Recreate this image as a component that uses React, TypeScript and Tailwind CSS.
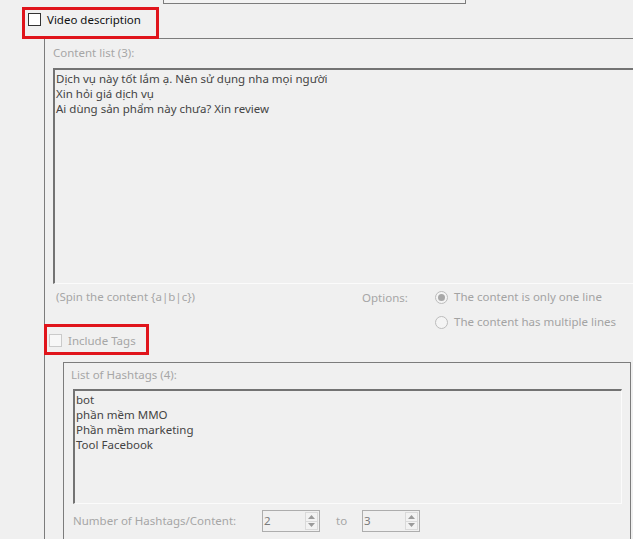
import React from "react";

const FONT = { fontFamily: '"Noto Sans", "Segoe UI", Arial, sans-serif' };

const contents = [
  "Dịch vụ này tốt lắm ạ. Nên sử dụng nha mọi người",
  "Xin hỏi giá dịch vụ",
  "Ai dùng sản phẩm này chưa? Xin review",
];

const hashtags = ["bot", "phần mềm MMO", "Phần mềm marketing", "Tool Facebook"];

function Radio({ checked, label }: { checked?: boolean; label: string }) {
  return (
    <div className="flex h-[16px] items-center gap-[6px]">
      <span className="flex h-[13px] w-[13px] items-center justify-center rounded-full border border-[#bcbcbc] bg-[#f4f4f4]">
        {checked && <span className="h-[7px] w-[7px] rounded-full bg-[#a8a8a8]" />}
      </span>
      <span className="text-[#a3a3a3]">{label}</span>
    </div>
  );
}

function Spin({ value }: { value: string }) {
  return (
    <div className="flex h-[22px] w-[58px] border border-[#adadad] bg-[#f0f0f0]">
      <span className="flex-1 pl-[1px] leading-[20px] text-[#7a7a7a]">{value}</span>
      <div className="my-[1px] mr-[1px] flex w-[13px] flex-col">
        <div className="flex flex-1 items-center justify-center border border-[#dadada] bg-[#f2f2f2]">
          <svg width="7" height="4" viewBox="0 0 7 4"><path d="M0 4 L3.5 0 L7 4 Z" fill="#9a9a9a" /></svg>
        </div>
        <div className="flex flex-1 items-center justify-center border border-t-0 border-[#dadada] bg-[#f2f2f2]">
          <svg width="7" height="4" viewBox="0 0 7 4"><path d="M0 0 L3.5 4 L7 0 Z" fill="#9a9a9a" /></svg>
        </div>
      </div>
    </div>
  );
}

export default function App() {
  return (
    <div className="h-[539px] w-[633px] overflow-hidden bg-[#f0f0f0] text-[11.5px]" style={FONT}>
      {/* textbox cut off at the top */}
      <div className="ml-[163px] h-[4px] w-[303px] border-x border-b border-[#7c7c7c] bg-[#f3f3f3]" />

      {/* Video description header */}
      <div className="mt-[3px] flex">
        <div className="ml-[22px] flex h-[32px] w-[137px] items-start gap-[6px] border-[3px] border-[#e0141b] pl-[3px] pt-[2px]">
          <span className="mt-[1px] h-[13px] w-[13px] border border-[#333] bg-white" />
          <span className="leading-[15px] text-[#111]">Video description</span>
        </div>
        <div className="flex-1 border-b border-[#7c7c7c]" />
      </div>

      {/* outer group */}
      <div className="ml-[44px] border-l border-[#7c7c7c] pl-[8px] pt-[6px]">
        <div className="leading-[15px] text-[#a6a6a6]">Content list (3):</div>
        <div className="mt-[8px] h-[216px] w-[600px] border-b border-l-2 border-r border-t-2 border-b-[#fbfbfb] border-l-[#737373] border-r-[#fbfbfb] border-t-[#737373] pl-[1px] pt-[1px] leading-[15px] text-[#444]">
          {contents.map((c) => (
            <div key={c}>{c}</div>
          ))}
        </div>

        <div className="mt-[5px] flex">
          <div className="w-[309px]">
            <div className="pl-[3px] leading-[15px] text-[#a6a6a6]">(Spin the content {"{a|b|c}"})</div>
            <div className="ml-[-9px] mt-[20px] flex h-[31px] w-[105px] items-center gap-[6px] border-[3px] border-[#e0141b] pl-[2px] pt-[2px]">
              <span className="h-[13px] w-[13px] border border-[#cacaca] bg-[#f7f7f7]" />
              <span className="text-[#a6a6a6]">Include Tags</span>
            </div>
          </div>
          <div className="w-[73px] pt-[1px] leading-[15px] text-[#a6a6a6]">Options:</div>
          <div className="flex flex-col gap-[9px]">
            <Radio checked label="The content is only one line" />
            <Radio label="The content has multiple lines" />
          </div>
        </div>

        {/* inner group */}
        <div className="ml-[10px] mt-[7px] h-[200px] w-[568px] border-l border-r border-t border-[#7c7c7c] pl-[7px] pt-[4px]">
          <div className="leading-[15px] text-[#a6a6a6]">List of Hashtags (4):</div>
          <div className="ml-[2px] mt-[7px] h-[115px] w-[549px] border-b border-l-2 border-r border-t-2 border-b-[#fbfbfb] border-l-[#737373] border-r-[#fbfbfb] border-t-[#737373] pl-[1px] pt-[1px] leading-[15px] text-[#444]">
            {hashtags.map((h) => (
              <div key={h}>{h}</div>
            ))}
          </div>
          <div className="ml-[2px] mt-[6px] flex items-center">
            <span className="w-[189px] text-[#a6a6a6]">Number of Hashtags/Content:</span>
            <Spin value="2" />
            <span className="w-[42px] pl-[16px] text-[#a6a6a6]">to</span>
            <Spin value="3" />
          </div>
        </div>
      </div>
    </div>
  );
}
